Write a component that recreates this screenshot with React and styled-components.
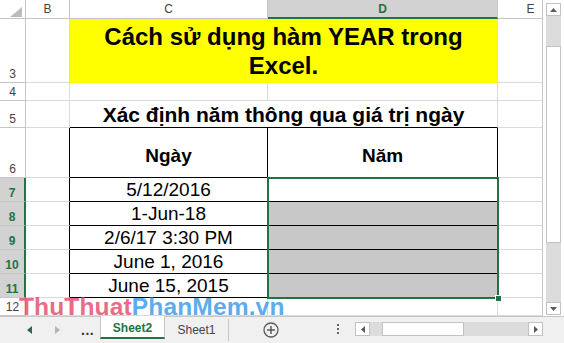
import React from 'react'
import styled, { createGlobalStyle } from 'styled-components'

const GREEN = '#217346'
const GRID = '#dadada'
const HEAD_LINE = '#c6c6c6'

const GlobalStyle = createGlobalStyle`
    html, body {
        margin: 0;
        padding: 0;
        background: #fff;
        overflow: hidden;
    }
    body {
        font-family: "Liberation Sans", Arial, sans-serif;
    }
`

const dates = ['5/12/2016', '1-Jun-18', '2/6/17 3:30 PM', 'June 1, 2016', 'June 15, 2015']

const App = () => {
    return (
        <Window>
            <GlobalStyle />
            <Main>
                <Sheet>
                    <Corner>
                        <svg width="12" height="10" viewBox="0 0 12 10">
                            <polygon points="12,0 12,10 0,10" fill="#bcbcbc" />
                        </svg>
                    </Corner>
                    <ColHead>B</ColHead>
                    <ColHead>C</ColHead>
                    <ColHead $active>D</ColHead>
                    <ColHead>E</ColHead>

                    <RowHead>3</RowHead>
                    <Cell />
                    <Cell $span={2} $fill="#ffff00" $v="center">
                        <Title>Cách sử dụng hàm YEAR trong Excel.</Title>
                    </Cell>
                    <Cell />

                    <RowHead>4</RowHead>
                    <Cell />
                    <Cell />
                    <Cell />
                    <Cell />

                    <RowHead>5</RowHead>
                    <Cell />
                    <Cell $span={2} $b="#000">
                        <Caption>Xác định năm thông qua giá trị ngày</Caption>
                    </Cell>
                    <Cell />

                    <RowHead>6</RowHead>
                    <Cell $r="#000" />
                    <Cell $r="#000" $b="#000" $v="center">
                        <HeadText>Ngày</HeadText>
                    </Cell>
                    <Cell $r="#000" $b="#000" $v="center">
                        <HeadText>Năm</HeadText>
                    </Cell>
                    <Cell />

                    {dates.map((d, i) => (
                        <React.Fragment key={d}>
                            <RowHead $active>{7 + i}</RowHead>
                            <Cell $r="#000" />
                            <Cell $r="#000" $b="#000">
                                <Value>{d}</Value>
                            </Cell>
                            <Cell $r="#000" $b="#000" $fill={i > 0 ? '#c8c8c8' : undefined}>
                                {i === 0 && (
                                    <Selection>
                                        <FillHandle />
                                    </Selection>
                                )}
                            </Cell>
                            <Cell />
                        </React.Fragment>
                    ))}

                    <RowHead>12</RowHead>
                    <Cell />
                    <Cell />
                    <Cell />
                    <Cell />
                </Sheet>

                <VScroll>
                    <ScrollButton $h={13}>
                        <svg width="7" height="4" viewBox="0 0 7 4">
                            <polygon points="0,4 7,4 3.5,0" fill="#5a5a5a" />
                        </svg>
                    </ScrollButton>
                    <VTrack>
                        <VThumb />
                    </VTrack>
                    <ScrollButton $h={13}>
                        <svg width="7" height="4" viewBox="0 0 7 4">
                            <polygon points="0,0 7,0 3.5,4" fill="#5a5a5a" />
                        </svg>
                    </ScrollButton>
                </VScroll>
            </Main>

            <TabBar>
                <Nav>
                    <svg width="5" height="8" viewBox="0 0 5 8">
                        <polygon points="5,0 5,8 0,4" fill="#2f6a48" />
                    </svg>
                    <NavGap $w={23} />
                    <svg width="5" height="8" viewBox="0 0 5 8">
                        <polygon points="0,0 0,8 5,4" fill="#b4b4b4" />
                    </svg>
                    <NavGap $w={21} />
                    <Ellipsis>...</Ellipsis>
                </Nav>
                <SheetTab $active>Sheet2</SheetTab>
                <SheetTab>Sheet1</SheetTab>
                <AddSheet>
                    <svg width="16" height="16" viewBox="0 0 16 16">
                        <circle cx="8" cy="8" r="7" fill="none" stroke="#5a5a5a" strokeWidth="1.3" />
                        <line x1="8" y1="4" x2="8" y2="12" stroke="#5a5a5a" strokeWidth="1.5" />
                        <line x1="4" y1="8" x2="12" y2="8" stroke="#5a5a5a" strokeWidth="1.5" />
                    </svg>
                </AddSheet>
                <Grip>
                    <i />
                    <i />
                    <i />
                </Grip>
                <HScroll>
                    <ScrollButton $w={15}>
                        <svg width="4" height="7" viewBox="0 0 4 7">
                            <polygon points="4,0 4,7 0,3.5" fill="#5a5a5a" />
                        </svg>
                    </ScrollButton>
                    <HTrack>
                        <HThumb />
                    </HTrack>
                    <ScrollButton $w={15}>
                        <svg width="4" height="7" viewBox="0 0 4 7">
                            <polygon points="0,0 0,7 4,3.5" fill="#5a5a5a" />
                        </svg>
                    </ScrollButton>
                </HScroll>
            </TabBar>

            <Watermark>
                <span>ThuThuat</span>
                <b>PhanMem.vn</b>
            </Watermark>
        </Window>
    )
}

export default App


const Window = styled.div`
    position: relative;
    width: 564px;
    height: 343px;
    overflow: hidden;
    display: flex;
    flex-direction: column;
    background: #fff;
`

const Main = styled.div`
    height: 316px;
    display: flex;
`

const Sheet = styled.div`
    box-sizing: border-box;
    width: 543px;
    overflow: hidden;
    border-right: 1px solid ${HEAD_LINE};
    display: grid;
    grid-template-columns: 26px 44px 198px 230px 66px;
    grid-template-rows: 19px 64px 18px 27px 50px repeat(5, 24px) 18px;
`

const Corner = styled.div`
    box-sizing: border-box;
    display: flex;
    align-items: flex-end;
    justify-content: flex-end;
    padding: 0 3px 1px 0;
    border-right: 1px solid ${HEAD_LINE};
    border-bottom: 1px solid ${HEAD_LINE};
`

const ColHead = styled.div`
    box-sizing: border-box;
    display: flex;
    align-items: center;
    justify-content: center;
    font-size: 12px;
    color: ${(p) => (p.$active ? GREEN : '#444')};
    font-weight: ${(p) => (p.$active ? 700 : 400)};
    background: ${(p) => (p.$active ? '#d2d2d2' : '#fff')};
    border-right: 1px solid ${HEAD_LINE};
    border-bottom: ${(p) => (p.$active ? `2px solid ${GREEN}` : `1px solid ${HEAD_LINE}`)};
`

const RowHead = styled.div`
    box-sizing: border-box;
    display: flex;
    align-items: flex-end;
    justify-content: center;
    padding-bottom: 1px;
    font-size: 12px;
    line-height: 14px;
    color: ${(p) => (p.$active ? GREEN : '#444')};
    font-weight: ${(p) => (p.$active ? 700 : 400)};
    background: ${(p) => (p.$active ? '#d2d2d2' : '#fff')};
    border-bottom: 1px solid ${HEAD_LINE};
    border-right: ${(p) => (p.$active ? `2px solid ${GREEN}` : `1px solid ${HEAD_LINE}`)};
`

const Cell = styled.div`
    box-sizing: border-box;
    position: relative;
    grid-column: span ${(p) => p.$span || 1};
    display: flex;
    justify-content: center;
    align-items: ${(p) => (p.$v === 'center' ? 'center' : 'flex-end')};
    text-align: center;
    color: #000;
    background: ${(p) => p.$fill || '#fff'};
    border-right: 1px solid ${(p) => p.$r || p.$fill || GRID};
    border-bottom: 1px solid ${(p) => p.$b || p.$fill || GRID};
`

const Title = styled.div`
    font-size: 24px;
    line-height: 29px;
    font-weight: 700;
    padding: 0 4px;
`

const Caption = styled.div`
    font-size: 21px;
    line-height: 24px;
    font-weight: 700;
    white-space: nowrap;
`

const HeadText = styled.div`
    font-size: 19px;
    line-height: 22px;
    font-weight: 700;
    padding-top: 6px;
`

const Value = styled.div`
    font-size: 19px;
    line-height: 22px;
    white-space: nowrap;
`

const Selection = styled.div`
    position: absolute;
    left: -1px;
    top: -1px;
    width: 232px;
    height: 122px;
    box-sizing: border-box;
    border: 2px solid ${GREEN};
    z-index: 2;
    pointer-events: none;
`

const FillHandle = styled.div`
    position: absolute;
    right: -4px;
    bottom: -4px;
    width: 5px;
    height: 5px;
    background: ${GREEN};
    box-shadow: 0 0 0 1px #fff;
`

const VScroll = styled.div`
    box-sizing: border-box;
    width: 21px;
    display: flex;
    flex-direction: column;
    padding: 3px 3px 1px 3px;
`

const ScrollButton = styled.div`
    box-sizing: border-box;
    flex: none;
    ${(p) => (p.$h ? `height: ${p.$h}px;` : '')}
    ${(p) => (p.$w ? `width: ${p.$w}px;` : '')}
    display: flex;
    align-items: center;
    justify-content: center;
    background: #fff;
    border: 1px solid #c2c2c2;
`

const VTrack = styled.div`
    flex: 1;
    background: #dcdcdc;
    padding-top: 30px;
`

const VThumb = styled.div`
    box-sizing: border-box;
    height: 197px;
    background: #fff;
    border: 1px solid #c2c2c2;
`

const TabBar = styled.div`
    box-sizing: border-box;
    height: 27px;
    display: flex;
    align-items: flex-start;
    background: #f0f0f0;
    border-top: 1px solid ${HEAD_LINE};
    font-size: 12px;
`

const Nav = styled.div`
    box-sizing: border-box;
    width: 100px;
    height: 26px;
    display: flex;
    align-items: center;
    padding-left: 27px;
`

const NavGap = styled.div`
    width: ${(p) => p.$w}px;
`

const Ellipsis = styled.span`
    font-size: 14px;
    font-weight: 700;
    color: #333;
    letter-spacing: 0.5px;
`

const SheetTab = styled.div`
    box-sizing: border-box;
    width: ${(p) => (p.$active ? 65 : 64)}px;
    height: ${(p) => (p.$active ? 23 : 22)}px;
    margin-top: ${(p) => (p.$active ? -1 : 2)}px;
    display: flex;
    align-items: center;
    justify-content: center;
    padding-top: ${(p) => (p.$active ? 3 : 0)}px;
    color: ${(p) => (p.$active ? GREEN : '#444')};
    font-weight: ${(p) => (p.$active ? 700 : 400)};
    background: ${(p) => (p.$active ? '#fff' : 'transparent')};
    border-left: ${(p) => (p.$active ? `1px solid ${HEAD_LINE}` : 'none')};
    border-right: 1px solid ${HEAD_LINE};
    border-bottom: ${(p) => (p.$active ? `2px solid ${GREEN}` : 'none')};
`

const AddSheet = styled.div`
    margin: 5px 0 0 34px;
    width: 16px;
    height: 16px;
    display: flex;
`

const Grip = styled.div`
    margin: 7px 0 0 58px;
    width: 3px;
    display: flex;
    flex-direction: column;
    gap: 2px;

    i {
        display: block;
        width: 2px;
        height: 2px;
        background: #666;
    }
`

const HScroll = styled.div`
    margin: 5px 0 0 15px;
    width: 188px;
    height: 14px;
    display: flex;
`

const HTrack = styled.div`
    flex: 1;
    background: #dcdcdc;
    padding-left: 12px;
`

const HThumb = styled.div`
    box-sizing: border-box;
    width: 82px;
    height: 14px;
    background: #fff;
    border: 1px solid #c2c2c2;
`

const Watermark = styled.div`
    position: absolute;
    left: 19px;
    top: 298px;
    font-size: 24.6px;
    line-height: 18px;
    font-weight: 700;
    letter-spacing: 0.1px;
    white-space: nowrap;
    z-index: 5;
    pointer-events: none;

    span {
        color: #e33a5e;
        opacity: 0.75;
    }

    b {
        color: #1e8ee6;
        opacity: 0.72;
    }
`
